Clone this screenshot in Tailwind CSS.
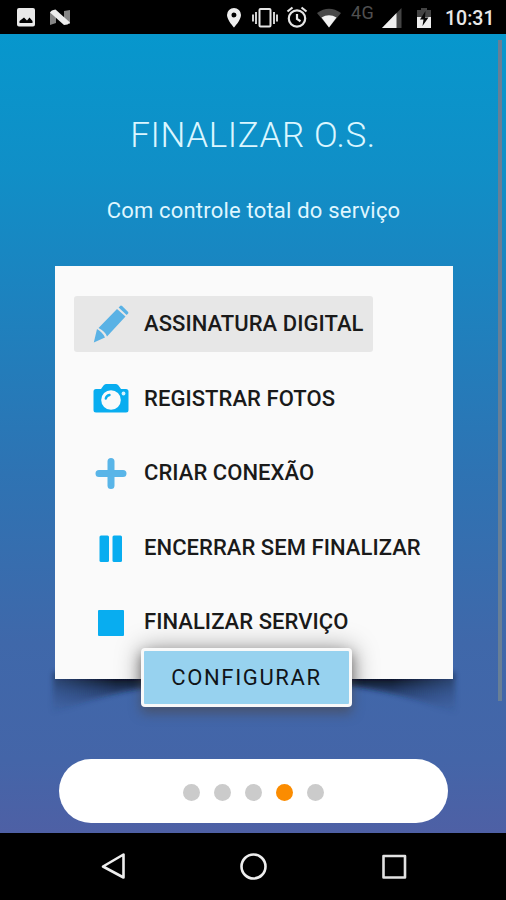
<!DOCTYPE html>
<html lang="pt-BR">
<head>
<meta charset="utf-8">
<title>Finalizar O.S.</title>
<script src="https://cdn.jsdelivr.net/npm/@tailwindcss/browser@4"></script>
</head>
<body class="w-[506px] h-[900px] overflow-hidden bg-black font-['Roboto',sans-serif]">
<div class="flex flex-col w-[506px] h-[900px]">

  <!-- Status bar -->
  <header class="h-[34px] shrink-0 bg-black flex items-start text-[#e8e8e8]">
    <svg class="ml-4 mt-2 shrink-0" width="20" height="19" viewBox="0 0 20 19"><path fill="#e9e9e9" fill-rule="evenodd" d="M3 0h14q2 0 2 2v14.500q0 2-2 2H3q-2 0-2-2V2Q1 0 3 0zM3.500 15h13v-2l-3-3.500-2.500 3L8 9.500 3.500 13z"/></svg>
    <svg class="ml-[13px] mt-[9px] shrink-0" width="22" height="18" viewBox="0 0 22 18"><path fill="#858585" d="M1 3l6 3v8l-6 2zM15 2l6-1v14l-6-2z"/><path fill="#ededed" d="M1 3.500Q2 1 6.500.500L21 13.500Q19 16 15 16z"/></svg>
    <svg class="ml-[155px] mt-2 shrink-0" width="16" height="20" viewBox="0 0 16 20"><path fill="#eee" fill-rule="evenodd" d="M8 0a7 7 0 0 1 7 7c0 5-7 12.500-7 12.500S1 12 1 7a7 7 0 0 1 7-7zm0 4.500a2.500 2.500 0 1 0 0 5 2.500 2.500 0 0 0 0-5z"/></svg>
    <svg class="ml-[9px] mt-2 shrink-0" width="28" height="20" viewBox="0 0 28 20" fill="none" stroke="#e6e6e6" stroke-width="2"><rect x="8.500" y="1" width="11" height="17.500" rx="1"/><path d="M5 4v12M2 6.500v7M23 4v12M26 6.500v7" stroke-width="1.800"/></svg>
    <svg class="ml-[7px] mt-[6px] shrink-0" width="22" height="22" viewBox="0 0 22 22" fill="none" stroke="#e6e6e6" stroke-width="2.200"><circle cx="11" cy="12.500" r="8.200"/><path d="M11 8v5l3.500 2.200M1.500 5.500L6.500 1.500M20.500 5.500L15.500 1.500"/></svg>
    <svg class="ml-[8px] mt-2 shrink-0" width="26" height="20" viewBox="0 0 26 20"><path fill="#484848" d="M1 5q12-8.500 24 0L13 19.500z"/><path fill="#f2f2f2" d="M5.500 9.500q7.500-4.500 15 0L13 19.500z"/></svg>
    <div class="ml-[9px] mt-[3px] w-[26px] text-[18px] leading-[20px] text-[#505050] tracking-[0.500px] whitespace-nowrap">4G</div>
    <svg class="ml-[4px] mt-2 shrink-0" width="22" height="21" viewBox="0 0 22 21"><path fill="#444" d="M20.500 0v20H1z"/><path fill="#f0f0f0" d="M15.500 5v15H1z"/></svg>
    <svg class="ml-[13px] mt-2 shrink-0" width="16" height="21" viewBox="0 0 16 21"><path fill="#444" d="M5 0h6v2h4v9H1V2h4z"/><path fill="#eee" d="M1 9h14v11H1z"/><path fill="#080808" d="M9.500 3L4 11.500h3.500L6.500 18l6-8.500H9z"/></svg>
    <div class="ml-[13px] mt-[7px] text-[19.500px] leading-[23px] font-medium whitespace-nowrap">10:31</div>
  </header>

  <!-- Page -->
  <main class="relative h-[799px] shrink-0 flex flex-col items-center bg-[linear-gradient(180deg,#0797cd_0%,#108fc7_17%,#1b84c0_31%,#2e73b3_55%,#3f68aa_76%,#4465a8_91%,#4e60a5_100%)]">
    <h1 class="mt-[82px] h-[40px] text-[35px] leading-[40px] font-light tracking-[0.600px] text-[#dbf6ff] whitespace-nowrap">FINALIZAR O.S.</h1>
    <p class="mt-[41px] h-[28px] pl-[1px] text-[22px] leading-[28px] tracking-[0.200px] text-[#dff6ff] whitespace-nowrap">Com controle total do serviço</p>

    <section class="relative mt-[41px] ml-[2px] w-[398px] h-[413px]">
      <!-- Curled corner shadows -->
      <svg class="absolute -left-[10px] top-[400px]" width="418" height="60" viewBox="0 0 418 60">
        <defs>
          <linearGradient id="sh" x1="0" y1="13" x2="0" y2="50" gradientUnits="userSpaceOnUse"><stop offset="0" stop-color="#06101c"/><stop offset=".35" stop-color="#12233f" stop-opacity=".6"/><stop offset="1" stop-color="#1b3260" stop-opacity="0"/></linearGradient>
          <linearGradient id="fade" x1="0" y1="0" x2="418" y2="0" gradientUnits="userSpaceOnUse"><stop offset="0.010" stop-color="#fff" stop-opacity=".35"/><stop offset=".17" stop-color="#fff" stop-opacity=".95"/><stop offset=".83" stop-color="#fff" stop-opacity=".95"/><stop offset=".99" stop-color="#fff" stop-opacity=".35"/></linearGradient>
          <filter id="soft" x="-10%" y="-30%" width="120%" height="160%"><feGaussianBlur stdDeviation="2.500"/></filter>
          <mask id="m" maskUnits="userSpaceOnUse" x="0" y="0" width="418" height="60"><rect width="418" height="60" fill="url(#fade)"/></mask>
        </defs>
        <g mask="url(#m)"><path filter="url(#soft)" fill="url(#sh)" d="M8 6H122V19Q60 26 7 48zM410 6H296V19Q358 26 411 48z"/></g>
      </svg>
      <div class="relative w-full h-full bg-[#fafafa] overflow-hidden pt-[30px] pl-[19px]">
        <div class="absolute left-[92px] top-[389px] w-[200px] h-[56px] shadow-[0_0_26px_6px_rgba(0,0,0,0.4)]"></div>
        <ul class="relative flex flex-col gap-[18.600px] text-[22px] leading-[28px] font-medium text-[#1a1a1a] whitespace-nowrap">
          <li class="flex items-center w-[299px] h-[56px] rounded-[3px] bg-[#e7e7e7]">
            <svg class="ml-[18px] mr-[15px] shrink-0" width="37" height="40" viewBox="0 0 37 40" fill="#5ab2e5"><path d="M25 5l8.500 7.500L15 32.500Q13 27 6.500 24zM5 25Q10.500 28 13 33.500L1.800 38.500z"/><path d="M26.600 3.600l1.500-1.700q1-.700 2 .200l6 5.800q.800.900-.200 1.900l-1.300 1.300z"/></svg>
            <span class="tracking-[0.050px]">ASSINATURA DIGITAL</span>
          </li>
          <li class="flex items-center h-[56px]">
            <svg class="ml-[19px] mr-[15px] shrink-0" width="36" height="30" viewBox="0 0 36 30"><path fill="#08adf0" d="M3 5h5l2.500-3.500Q11.500 0 13 0h10q1.500 0 2.500 1.500L28 5h5q2.500 0 2.500 2.500V26q0 2.500-2.500 2.500H3Q.500 28.500.500 26V7.500Q.500 5 3 5z"/><circle cx="18" cy="16" r="9.800" fill="#fafafa"/><path fill="none" stroke="#08adf0" stroke-width="2.400" stroke-linecap="round" d="M12.800 14.500Q13.500 11.500 16.500 11"/><circle cx="30.500" cy="9.500" r="1.900" fill="#d4f2ff"/></svg>
            <span class="tracking-[0.050px]">REGISTRAR FOTOS</span>
          </li>
          <li class="flex items-center h-[56px]">
            <svg class="ml-[19px] mr-[15px] shrink-0" width="36" height="32" viewBox="0 0 36 32"><path stroke="#59b5e8" stroke-width="7" stroke-linecap="round" d="M18 4.500v24M6 16.500h24"/></svg>
            <span class="tracking-[0.050px]">CRIAR CONEXÃO</span>
          </li>
          <li class="flex items-center h-[56px]">
            <svg class="ml-[19px] mr-[15px] shrink-0" width="36" height="28" viewBox="0 0 36 28" fill="#08adf0"><rect x="6.500" y="1.500" width="9.500" height="26.500" rx="1.500"/><rect x="19.500" y="1.500" width="9.500" height="26.500" rx="1.500"/></svg>
            <span class="tracking-[0.050px]">ENCERRAR SEM FINALIZAR</span>
          </li>
          <li class="flex items-center h-[56px]">
            <svg class="ml-[19px] mr-[15px] shrink-0" width="36" height="28" viewBox="0 0 36 28" fill="#08adf0"><rect x="5" y="2" width="26" height="26" rx="1"/></svg>
            <span class="tracking-[0.050px]">FINALIZAR SERVIÇO</span>
          </li>
        </ul>
      </div>
      <button class="absolute left-[86px] top-[382px] w-[211px] h-[59px] rounded-[4px] border-[3px] border-[#f9f9f9] bg-[#97d2ef] text-[22px] leading-[28px] tracking-[1.650px] text-[#101418] whitespace-nowrap shadow-[0_6px_12px_0px_rgba(75,70,70,0.6)]"><span>CONFIGURAR</span></button>
    </section>

    <nav class="mt-[80px] w-[389px] h-[64px] rounded-full bg-white flex items-center justify-center gap-[14px] pt-[2px]">
      <i class="w-[17px] h-[17px] rounded-full bg-[#cbcbcb]"></i>
      <i class="w-[17px] h-[17px] rounded-full bg-[#cbcbcb]"></i>
      <i class="w-[17px] h-[17px] rounded-full bg-[#cbcbcb]"></i>
      <i class="w-[17px] h-[17px] rounded-full bg-[#fb8c00]"></i>
      <i class="w-[17px] h-[17px] rounded-full bg-[#cbcbcb]"></i>
    </nav>
    <!-- Scroll indicator -->
    <div class="absolute left-[498px] top-[6px] w-[4px] h-[661px] bg-[#687f96]"></div>
  </main>

  <!-- System navigation -->
  <footer class="h-[67px] shrink-0 bg-black flex items-start pt-[19px]" >
    <svg class="ml-[100px]" width="28" height="28" viewBox="0 0 28 28" fill="none" stroke="#eee" stroke-width="2.600" stroke-linejoin="round"><path d="M23.500 2.500v23L3 14.500z"/></svg>
    <svg class="ml-[111px]" width="28" height="28" viewBox="0 0 28 28" fill="none" stroke="#eee" stroke-width="2.600"><circle cx="14.500" cy="14.500" r="12"/></svg>
    <svg class="ml-[113px]" width="28" height="28" viewBox="0 0 28 28" fill="none" stroke="#e2e2e2" stroke-width="2.600" stroke-linejoin="round"><rect x="3.500" y="4" width="21.500" height="21.500"/></svg>
  </footer>
</div>
</body>
</html>
